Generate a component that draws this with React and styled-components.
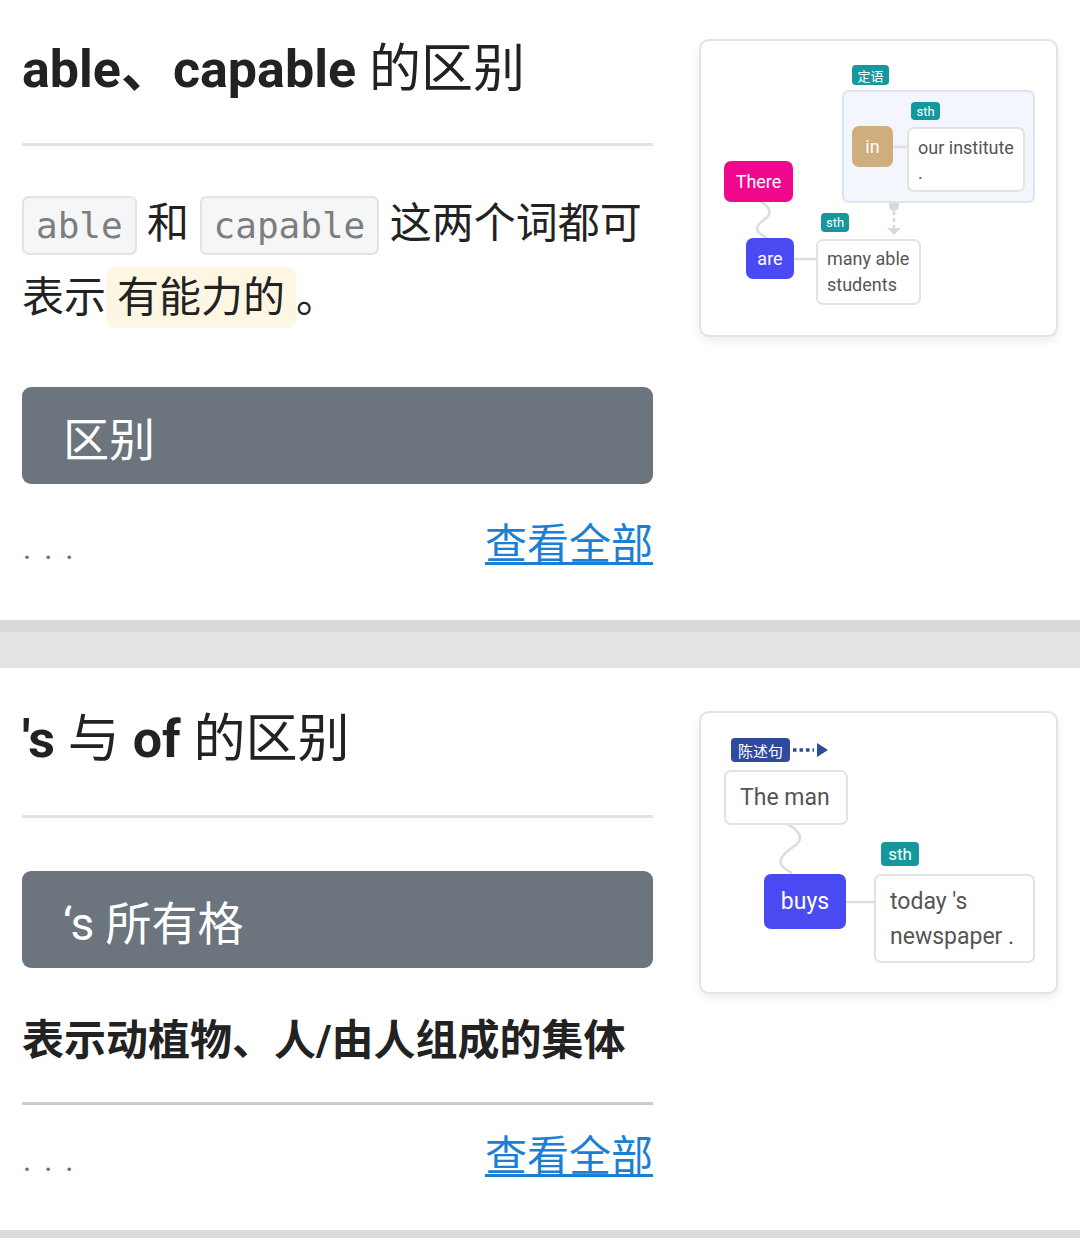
import React from "react";
import styled, { createGlobalStyle } from "styled-components";

const Global = createGlobalStyle`
  html, body { margin: 0; padding: 0; background: #ffffff; }
  body { font-family: Roboto, "Noto Sans CJK SC", sans-serif; color: #212121; }
  * { box-sizing: border-box; }
`;

const Page = styled.div`
  width: 1080px;
  display: flex;
  flex-direction: column;
`;

const Card = styled.section`
  display: flex;
  align-items: flex-start;
  gap: 46px;
  padding: ${(p) => p.$pt}px 22px ${(p) => p.$pb}px 22px;
  background: #ffffff;
`;

const Column = styled.div`
  width: 631px;
  flex: none;
  display: flex;
  flex-direction: column;
`;

const Title = styled.h1`
  margin: 0;
  font-size: 52px;
  line-height: 66px;
  font-weight: 700;
  color: #222222;
  white-space: nowrap;
`;

const Light = styled.span`
  font-weight: 400;
`;

const Divider = styled.hr`
  margin: ${(p) => p.$mt}px 0 0 0;
  height: 3px;
  border: none;
  background: ${(p) => p.$tone || "#e3e3e3"};
`;

const Para = styled.p`
  margin: 41px 0 0 0;
  height: 148px;
  font-size: 42px;
  line-height: 74px;
  color: #222222;
`;

const Code = styled.code`
  font-family: "DejaVu Sans Mono", monospace;
  font-size: 36px;
  line-height: 40px;
  color: #7d7d7d;
  background: #f5f6f7;
  border: 2px solid #e3e3e3;
  border-radius: 7px;
  padding: 7px 12px;
`;

const Mark = styled.span`
  background: #fdf6e3;
  border-radius: 9px;
  padding: 6px 11px;
`;

const Bar = styled.div`
  margin-top: ${(p) => p.$mt}px;
  height: 97px;
  display: flex;
  align-items: center;
  padding-left: 41px;
  background: #6c757d;
  border-radius: 9px;
  color: #ffffff;
  font-size: 46px;
`;

const Heading = styled.h2`
  margin: 44px 0 0 0;
  font-size: 42px;
  line-height: 58px;
  font-weight: 700;
  color: #222222;
  white-space: nowrap;
`;

const Footer = styled.div`
  margin-top: ${(p) => p.$mt}px;
  height: 60px;
  display: flex;
  justify-content: space-between;
  align-items: baseline;
`;

const Dots = styled.span`
  font-size: 31px;
  letter-spacing: 13px;
  color: #707070;
  padding-left: 1px;
`;

const Link = styled.a`
  font-size: 42px;
  line-height: 60px;
  color: #1b7fd5;
  text-decoration: underline;
  text-decoration-thickness: 3px;
  text-underline-offset: 3px;
  cursor: pointer;
`;

const Gap = styled.div`
  height: 48px;
  background: #e4e4e4;
  border-top: 12px solid #d9d9d9;
`;

const BottomGap = styled.div`
  height: 8px;
  background: #dcdcdc;
`;

/* ---------- diagram ---------- */

const Diagram = styled.div`
  position: relative;
  flex: none;
  width: 359px;
  height: ${(p) => p.$h}px;
  margin-top: ${(p) => p.$mt}px;
  background: #ffffff;
  border: 2px solid #e3e3e3;
  border-radius: 10px;
  box-shadow: 0 4px 8px rgba(0, 0, 0, 0.07);
`;

const Wires = styled.svg`
  position: absolute;
  left: 0;
  top: 0;
  width: 355px;
  height: 100%;
  overflow: visible;
`;

const Group = styled.div`
  position: absolute;
  left: ${(p) => p.$x}px;
  top: ${(p) => p.$y}px;
  width: ${(p) => p.$w}px;
  height: ${(p) => p.$h}px;
  background: #f3f6fd;
  border: 2px solid #dde3f3;
  border-radius: 7px;
`;

const Word = styled.div`
  position: absolute;
  left: ${(p) => p.$x}px;
  top: ${(p) => p.$y}px;
  width: ${(p) => p.$w}px;
  height: ${(p) => p.$h}px;
  display: flex;
  align-items: center;
  justify-content: center;
  background: ${(p) => p.$bg};
  color: #ffffff;
  border-radius: 7px;
  font-size: ${(p) => p.$fs}px;
`;

const Phrase = styled.div`
  position: absolute;
  left: ${(p) => p.$x}px;
  top: ${(p) => p.$y}px;
  width: ${(p) => p.$w}px;
  height: ${(p) => p.$h}px;
  display: flex;
  flex-direction: column;
  justify-content: center;
  padding: 0 ${(p) => p.$px}px;
  background: #ffffff;
  border: 2px solid #e3e3e3;
  border-radius: 7px;
  color: #555555;
  font-size: ${(p) => p.$fs}px;
  line-height: ${(p) => p.$lh}px;
  white-space: nowrap;
`;

const Tag = styled.div`
  position: absolute;
  left: ${(p) => p.$x}px;
  top: ${(p) => p.$y}px;
  width: ${(p) => p.$w}px;
  height: ${(p) => p.$h}px;
  display: flex;
  align-items: center;
  justify-content: center;
  background: ${(p) => p.$bg || "#16979e"};
  color: #ffffff;
  border-radius: 4px;
  font-size: ${(p) => p.$fs}px;
`;

function DiagramOne() {
  return (
    <Diagram $h={298} $mt={2}>
      <Group $x={141} $y={49} $w={193} $h={113} />
      <Wires viewBox="0 0 355 294">
        <line x1="191" y1="106" x2="206" y2="106" stroke="#dddddd" strokeWidth="2.5" />
        <line x1="93" y1="218" x2="115" y2="218" stroke="#dddddd" strokeWidth="2.5" />
        <path
          d="M58 160 C 67 164, 73 171, 64 178 C 56 184, 50 189, 66 197"
          fill="none"
          stroke="#dcdcdc"
          strokeWidth="2.5"
        />
        <path d="M188 162 L198 162 L198 165 A5 5 0 0 1 188 165 Z" fill="#d9d9d9" />
        <line x1="193" y1="170" x2="193" y2="187" stroke="#d9d9d9" strokeWidth="2.5" strokeDasharray="4 3" />
        <path d="M186 187 L200 187 L193 194 Z" fill="#d9d9d9" />
      </Wires>
      <Tag $x={151} $y={24} $w={37} $h={20} $fs={13}>定语</Tag>
      <Tag $x={210} $y={61} $w={29} $h={18} $fs={13}>sth</Tag>
      <Word $x={151} $y={85} $w={41} $h={41} $bg="#cfad7d" $fs={18}>in</Word>
      <Phrase $x={206} $y={86} $w={118} $h={65} $px={9} $fs={18} $lh={25}>
        <span>our institute</span>
        <span>.</span>
      </Phrase>
      <Word $x={23} $y={120} $w={69} $h={41} $bg="#ef078d" $fs={18}>There</Word>
      <Word $x={45} $y={197} $w={48} $h={41} $bg="#4a4af2" $fs={18}>are</Word>
      <Tag $x={120} $y={172} $w={28} $h={19} $fs={13}>sth</Tag>
      <Phrase $x={115} $y={198} $w={105} $h={66} $px={9} $fs={18} $lh={26}>
        <span>many able</span>
        <span>students</span>
      </Phrase>
    </Diagram>
  );
}

function DiagramTwo() {
  return (
    <Diagram $h={283} $mt={4}>
      <Wires viewBox="0 0 355 279">
        <line x1="92" y1="37" x2="113" y2="37" stroke="#2f4c9c" strokeWidth="3.5" strokeDasharray="3.5 3" />
        <path d="M116 30 L127 37 L116 44 Z" fill="#2f4c9c" />
        <path
          d="M86 111 C 98 117, 105 126, 92 134 C 80 142, 72 151, 91 160"
          fill="none"
          stroke="#dcdcdc"
          strokeWidth="2.5"
        />
        <line x1="145" y1="189" x2="173" y2="189" stroke="#dddddd" strokeWidth="2.5" />
      </Wires>
      <Tag $x={30} $y={25} $w={59} $h={24} $bg="#2f4c9c" $fs={15}>陈述句</Tag>
      <Phrase $x={23} $y={57} $w={124} $h={55} $px={14} $fs={23} $lh={34}>
        <span>The man</span>
      </Phrase>
      <Word $x={63} $y={161} $w={82} $h={55} $bg="#4a4af2" $fs={23}>buys</Word>
      <Tag $x={180} $y={129} $w={38} $h={24} $fs={17}>sth</Tag>
      <Phrase $x={173} $y={161} $w={161} $h={89} $px={14} $fs={23} $lh={35}>
        <span>today 's</span>
        <span>newspaper .</span>
      </Phrase>
    </Diagram>
  );
}

export default function App() {
  return (
    <Page>
      <Global />
      <Card $pt={37} $pb={45}>
        <Column>
          <Title>
            able、capable <Light>的区别</Light>
          </Title>
          <Divider $mt={40} />
          <Para>
            <Code>able</Code> 和 <Code>capable</Code> 这两个词都可表示<Mark>有能力的</Mark>。
          </Para>
          <Bar $mt={52}>区别</Bar>
          <Footer $mt={31}>
            <Dots>...</Dots>
            <Link>查看全部</Link>
          </Footer>
        </Column>
        <DiagramOne />
      </Card>
      <Gap />
      <Card $pt={39} $pb={43}>
        <Column>
          <Title>
            's <Light>与</Light> of <Light>的区别</Light>
          </Title>
          <Divider $mt={42} />
          <Bar $mt={53}>‘s 所有格</Bar>
          <Heading>表示动植物、人/由人组成的集体</Heading>
          <Divider $mt={32} $tone="#cccccc" />
          <Footer $mt={22}>
            <Dots>...</Dots>
            <Link>查看全部</Link>
          </Footer>
        </Column>
        <DiagramTwo />
      </Card>
      <BottomGap />
    </Page>
  );
}
